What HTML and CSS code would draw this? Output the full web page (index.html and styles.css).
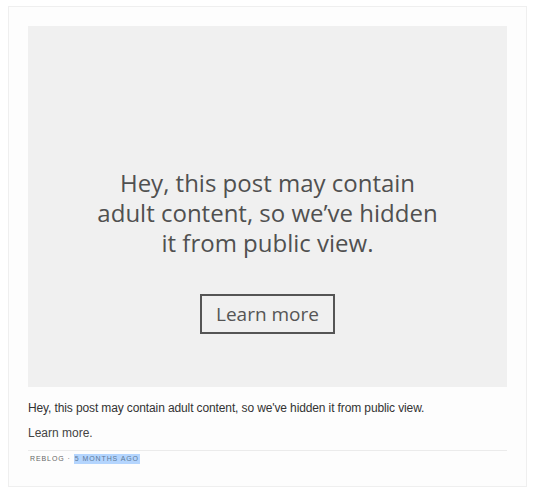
FILE: index.html
```html
<!DOCTYPE html>
<html>
<head>
<meta charset="utf-8">
<link rel="stylesheet" href="styles.css">
</head>
<body>
<article class="card">
  <div class="notice">
    <p class="notice-text">Hey, this post may contain<br>adult content, so we’ve hidden<br>it from public view.</p>
    <span class="notice-btn">Learn more</span>
  </div>
  <p class="body-text">Hey, this post may contain adult content, so we've hidden it from public view.</p>
  <p class="body-link">Learn more.</p>
  <footer class="meta">
    <span class="meta-item">REBLOG</span>
    <span class="meta-dot">·</span>
    <span class="meta-date">5 MONTHS AGO</span>
  </footer>
</article>
</body>
</html>
```

FILE: styles.css
```css
html, body {
  margin: 0;
  padding: 0;
  background: #ffffff;
}
body {
  padding: 6px 13px 0 8px;
  font-family: "Liberation Sans", Arial, sans-serif;
}
.card {
  width: 479px;
  border: 1px solid #efefef;
  background: #fdfdfd;
  padding: 19px 19px 22px 19px;
}
.notice {
  height: 361px;
  background: #f0f0f0;
  display: flex;
  flex-direction: column;
  align-items: center;
  box-sizing: border-box;
  padding-top: 142px;
}
.notice-text {
  margin: 0;
  font-family: "Open Sans", sans-serif;
  font-size: 24px;
  line-height: 30px;
  color: #505050;
  text-align: center;
}
.notice-btn {
  margin-top: 36px;
  width: 135px;
  height: 40px;
  box-sizing: border-box;
  border: 2px solid #555555;
  display: flex;
  align-items: center;
  justify-content: center;
  font-family: "Open Sans", sans-serif;
  font-size: 19px;
  color: #555555;
}
.body-text {
  margin: 12px 0 0 0;
  font-size: 12px;
  letter-spacing: -0.12px;
  line-height: 18px;
  color: #333333;
}
.body-link {
  margin: 7px 0 0 0;
  font-size: 12px;
  line-height: 18px;
  color: #444444;
}
.meta {
  margin-top: 8px;
  border-top: 1px solid #ebebeb;
  padding-top: 3px;
  display: flex;
  align-items: center;
  gap: 3px;
  font-size: 7px;
  letter-spacing: 0.9px;
  color: #666666;
  line-height: 10px;
  padding-left: 2px;
}
.meta-date {
  background: #b4d5fe;
  color: #5d7a99;
  padding: 0 1px;
}
```
